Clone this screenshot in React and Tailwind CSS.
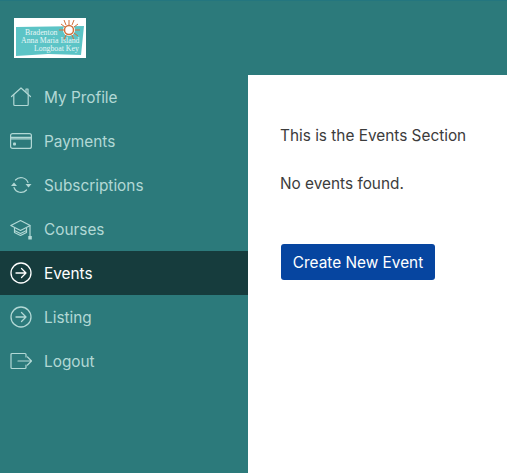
const NAV = [
  { label: "My Profile", icon: HomeIcon },
  { label: "Payments", icon: CardIcon },
  { label: "Subscriptions", icon: SyncIcon },
  { label: "Courses", icon: CapIcon },
  { label: "Events", icon: ArrowCircleIcon, active: true },
  { label: "Listing", icon: ArrowCircleIcon },
  { label: "Logout", icon: LogoutIcon },
];

function HomeIcon() {
  return (
    <svg width="22" height="22" viewBox="0 0 22 22" fill="none" stroke="currentColor" strokeWidth="1.200" strokeLinejoin="round" strokeLinecap="round">
      <path d="M1.500 10.500 11 2l9.500 8.500" />
      <path d="M3.800 8.500v10a1 1 0 0 0 1 1h12.400a1 1 0 0 0 1-1v-10" />
      <path d="M16 5.500V3h2v4.500" />
    </svg>
  );
}

function CardIcon() {
  return (
    <svg width="22" height="22" viewBox="0 0 22 22" fill="none" stroke="currentColor" strokeWidth="1.200">
      <rect x="0.600" y="3.600" width="20.800" height="14.800" rx="2" />
      <path d="M0.600 7.300h20.800M0.600 8.800h20.800" />
      <rect x="3" y="12.500" width="3" height="3" rx="1" fill="currentColor" stroke="none" />
    </svg>
  );
}

function SyncIcon() {
  return (
    <svg width="22" height="22" viewBox="0 0 22 22" fill="none" stroke="currentColor" strokeWidth="1.200" strokeLinecap="round">
      <path d="M5.500 6A7.500 7.500 0 0 1 18 8.500" />
      <path d="M16.500 16A7.500 7.500 0 0 1 4 13.500" />
      <path d="M15.500 10h6L18.500 13.500z" fill="currentColor" stroke="none" />
      <path d="M1 12h6L4 8.500z" fill="currentColor" stroke="none" />
    </svg>
  );
}

function CapIcon() {
  return (
    <svg width="22" height="22" viewBox="0 0 22 22" fill="none" stroke="currentColor" strokeWidth="1.200" strokeLinejoin="round">
      <path d="M0.800 7.500 10.500 2.500l9.700 5-9.700 5z" />
      <path d="M4.500 10v4.500l6 3 6-3V10" />
      <path d="M4.500 12.500l6 3 6-3" />
      <path d="M20 8v10" />
      <rect x="18.300" y="18" width="3.500" height="3.500" fill="currentColor" stroke="none" />
    </svg>
  );
}

function ArrowCircleIcon() {
  return (
    <svg width="22" height="22" viewBox="0 0 22 22" fill="none" stroke="currentColor" strokeWidth="1.300" strokeLinecap="round" strokeLinejoin="round">
      <circle cx="11" cy="11" r="10" />
      <path d="M6 11h10M11.500 6.500 16 11l-4.500 4.500" />
    </svg>
  );
}

function LogoutIcon() {
  return (
    <svg width="22" height="22" viewBox="0 0 22 22" fill="none" stroke="currentColor" strokeWidth="1.200" strokeLinecap="round" strokeLinejoin="round">
      <path d="M16 7V4.500a1 1 0 0 0-1-1H2a1 1 0 0 0-1 1v13a1 1 0 0 0 1 1h13a1 1 0 0 0 1-1V15" />
      <path d="M8 11h13.500M17.500 7l4 4-4 4" />
    </svg>
  );
}

function Logo() {
  return (
    <div className="relative h-[40px] w-[72px] bg-white">
      <svg className="absolute inset-0" width="72" height="40" viewBox="0 0 72 40">
        <path d="M2 9 70 8 67 37 34 36 2 38Z" fill="#5cc4c6" />
        <circle cx="55" cy="12" r="6" fill="#fff" />
        <circle cx="55" cy="12" r="4.500" fill="none" stroke="#d2703a" strokeWidth="1.500" />
        <path
          d="M55 2v5M60 2l-2 5M64 6l-4 3M66 12h-5M64 18l-4-3M60 22l-2-5M50 22l2-5M45 12h5M47 6l4 3M50 2l2 5"
          stroke="#d2703a"
          strokeWidth="1"
        />
      </svg>
      <div className="absolute left-0 top-[11px] flex w-full flex-col font-['Liberation_Serif',serif] text-[7.800px] leading-[8px] whitespace-nowrap text-[#e9f7f7]">
        <span className="pl-[11px]">Bradenton</span>
        <span className="pl-[7px]">Anna Maria Island</span>
        <span className="pl-[20px]">Longboat Key</span>
      </div>
    </div>
  );
}

export default function App() {
  return (
    <div className="flex h-[473px] w-[507px] flex-col overflow-hidden border-t border-[#24767f] bg-[#2c7a7b] font-['Inter',sans-serif] text-[15.360px] leading-6">
      <header className="h-[74px] pl-[14px] pt-[17px]">
        <Logo />
      </header>
      <div className="flex flex-1">
        <nav className="w-[248px]">
          {NAV.map(({ label, icon: Icon, active }) => (
            <a
              key={label}
              href="#"
              className={
                active
                  ? "flex h-[44px] items-center gap-3 bg-[#163c3d] pl-[10px] text-white"
                  : "flex h-[44px] items-center gap-3 pl-[10px] text-[#b2d8d5]"
              }
            >
              <Icon />
              <span className="pt-0.5">{label}</span>
            </a>
          ))}
        </nav>
        <main className="flex-1 bg-white pl-8 pt-[49px] text-[#3c3c3c]">
          <p>This is the Events Section</p>
          <p className="mt-6">No events found.</p>
          <button className="ml-px mt-[48px] h-9 w-[154px] rounded-[3px] bg-[#0645a0] pt-0.5 text-white">
            Create New Event
          </button>
        </main>
      </div>
    </div>
  );
}
